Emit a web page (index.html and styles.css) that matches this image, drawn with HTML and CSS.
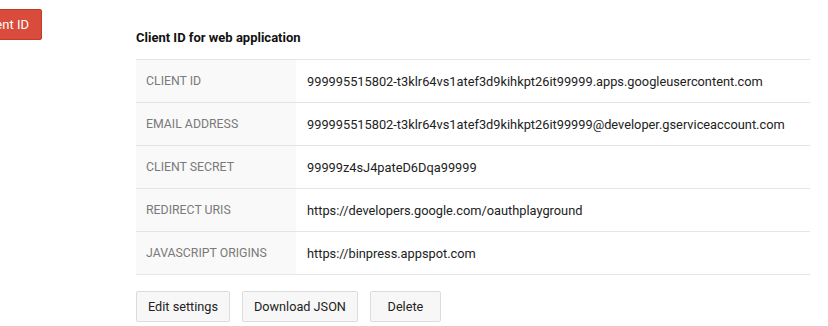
FILE: index.html
```html
<!DOCTYPE html>
<html lang="en">
  <head>
    <meta charset="UTF-8" />
    <title>Credentials</title>
    <link rel="stylesheet" href="styles.css">
  </head>

  <body>
    <div class="page">
      <div class="sidebar">
        <div class="create-wrap">
          <button class="btn-red">Create new Client ID</button>
        </div>
      </div>

      <div class="content">
        <h3 class="title">Client ID for web application</h3>

        <table class="creds">
          <tr>
            <td class="label">CLIENT ID</td>
            <td class="value">999995515802-t3klr64vs1atef3d9kihkpt26it99999.apps.googleusercontent.com</td>
          </tr>
          <tr>
            <td class="label">EMAIL ADDRESS</td>
            <td class="value">999995515802-t3klr64vs1atef3d9kihkpt26it99999@developer.gserviceaccount.com</td>
          </tr>
          <tr>
            <td class="label">CLIENT SECRET</td>
            <td class="value">99999z4sJ4pateD6Dqa99999</td>
          </tr>
          <tr>
            <td class="label">REDIRECT URIS</td>
            <td class="value">https://developers.google.com/oauthplayground</td>
          </tr>
          <tr>
            <td class="label">JAVASCRIPT ORIGINS</td>
            <td class="value">https://binpress.appspot.com</td>
          </tr>
        </table>

        <div class="actions">
          <button class="btn">Edit settings</button>
          <button class="btn">Download JSON</button>
          <button class="btn">Delete</button>
        </div>
      </div>
    </div>
  </body>
</html>
```

FILE: styles.css
```css
body {
  margin: 0;
  font-family: Roboto, 'Liberation Sans', sans-serif;
  font-size: 13px;
  color: #222;
  background-color: #fff;
}

.page {
  display: flex;
}

.sidebar {
  width: 42px;
  padding-top: 9px;
}

.create-wrap {
  display: flex;
  justify-content: flex-end;
  overflow: hidden;
  width: 42px;
}

.btn-red {
  flex-shrink: 0;
  height: 31px;
  padding: 0 12px;
  font-family: inherit;
  font-size: 13px;
  color: #fff;
  background-color: #d94b3a;
  border: 1px solid #c23a2a;
  border-radius: 2px;
  white-space: nowrap;
}

.content {
  margin-left: 94px;
  padding-top: 30px;
}

.title {
  margin: 0 0 13px;
  font-size: 13px;
  line-height: 16px;
  font-weight: bold;
  color: #111;
}

.creds {
  width: 674px;
  border-collapse: collapse;
}

.creds td {
  height: 42px;
  padding: 0 10px;
  border-top: 1px solid #e5e5e5;
  border-bottom: 1px solid #e5e5e5;
  white-space: nowrap;
}

.creds .label {
  width: 140px;
  font-size: 12.3px;
  color: #7a7a7a;
  background-color: #f9f9f9;
}

.creds .value {
  padding-left: 11px;
  font-size: 12.8px;
  color: #222;
}

.actions {
  display: flex;
  gap: 12px;
  margin-top: 16px;
}

.btn {
  box-sizing: border-box;
  min-width: 71px;
  height: 31px;
  padding: 0 11px;
  font-family: inherit;
  font-size: 12.7px;
  color: #222;
  background-color: #f7f7f7;
  border: 1px solid #dcdcdc;
  border-radius: 2px;
}
```
